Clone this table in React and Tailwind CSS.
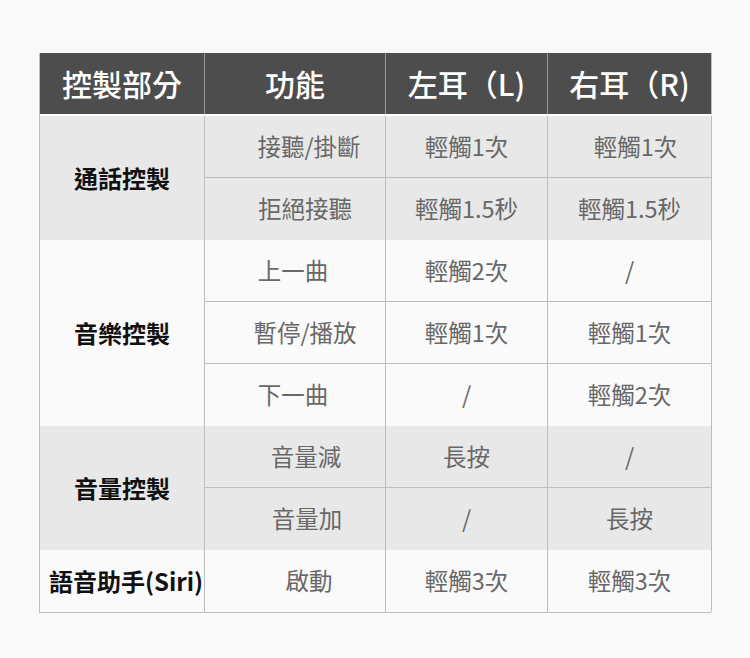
import React from "react";

const FONT = { fontFamily: '"Noto Sans CJK TC", "Noto Sans", sans-serif' };

// rows: [func, left, right, funcShift, rightShift]
const GROUPS = [
  {
    label: "通話控製",
    bg: "bg-[#e8e8e8]",
    shift: "",
    rows: [
      ["接聽/掛斷", "輕觸1次", "輕觸1次", "pl-[28px]", "pl-[12px]"],
      ["拒絕接聽", "輕觸1.5秒", "輕觸1.5秒", "pl-[20px]", ""],
    ],
  },
  {
    label: "音樂控製",
    bg: "bg-[#fbfafb]",
    shift: "",
    rows: [
      ["上一曲", "輕觸2次", "/", "pr-[4px]", ""],
      ["暫停/播放", "輕觸1次", "輕觸1次", "pl-[20px]", ""],
      ["下一曲", "/", "輕觸2次", "pr-[4px]", ""],
    ],
  },
  {
    label: "音量控製",
    bg: "bg-[#e8e8e8]",
    shift: "",
    rows: [
      ["音量減", "長按", "/", "pl-[22px]", ""],
      ["音量加", "/", "長按", "pl-[24px]", ""],
    ],
  },
  {
    label: "語音助手(Siri)",
    bg: "bg-[#fbfafb]",
    shift: "pl-[8px]",
    rows: [["啟動", "輕觸3次", "輕觸3次", "pl-[28px]", ""]],
  },
];

const HEADERS = ["控製部分", "功能", "左耳（L)", "右耳（R)"];

export default function App() {
  return (
    <div
      className="flex h-[658px] w-[750px] justify-center bg-[#faf9fa] pt-[53px]"
      style={FONT}
    >
      <div className="w-[672px] self-start border-b border-l border-[#bdbdbd]">
        <div className="grid grid-cols-[165px_181px_162px_164px] border-b-2 border-white bg-[#4d4d4d]">
          {HEADERS.map((h, i) => (
            <div
              key={h}
              className={`flex h-[61px] items-center justify-center border-r text-[30px] font-medium text-white ${
                i === 3 ? "border-[#bdbdbd]" : "border-[#9a9a9a]"
              }`}
            >
              {h}
            </div>
          ))}
        </div>
        {GROUPS.map((g) => (
          <div
            key={g.label}
            className={`grid grid-cols-[165px_181px_162px_164px] ${g.bg}`}
          >
            <div
              className={`flex items-center justify-center whitespace-nowrap border-r border-[#bdbdbd] text-[24px] font-bold text-[#111] ${g.shift}`}
              style={{ gridRow: `span ${g.rows.length}` }}
            >
              {g.label}
            </div>
            {g.rows.map((r, ri) =>
              r.slice(0, 3).map((c, ci) => (
                <div
                  key={`${ri}-${ci}`}
                  className={`flex h-[62px] items-center justify-center border-r border-[#bdbdbd] text-[23.5px] text-[#686868] ${
                    ri < g.rows.length - 1 ? "border-b" : ""
                  } ${ci === 0 ? r[3] : ci === 2 ? r[4] : ""}`}
                >
                  {c}
                </div>
              ))
            )}
          </div>
        ))}
      </div>
    </div>
  );
}
